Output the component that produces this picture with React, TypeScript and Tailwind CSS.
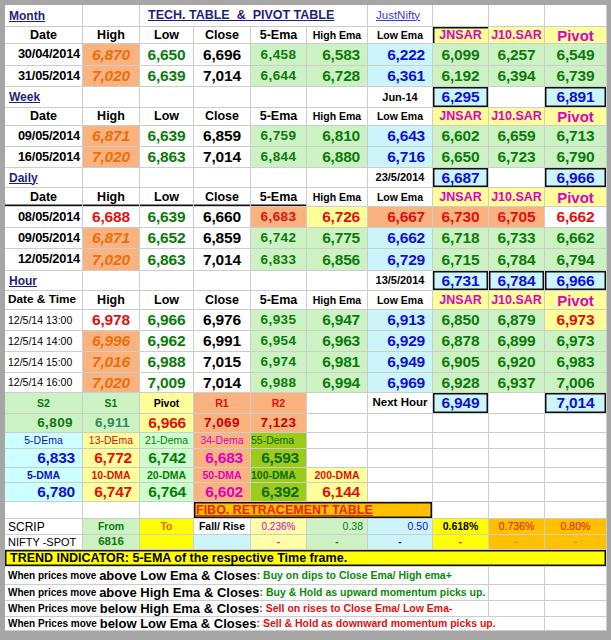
import clsx from 'clsx';
import type { ReactNode } from 'react';

const GRID = 'grid grid-cols-[78px_57px_54px_57px_56px_61px_65px_56px_56px_62px]';

const SPAN: Record<number, string> = {
  1: '',
  2: 'col-span-2',
  3: 'col-span-3',
  4: 'col-span-4',
  8: 'col-span-8',
  9: 'col-span-9',
  10: 'col-span-10',
};

const NUM = 'text-[15.5px] font-bold tracking-[-0.2px]';
const EMA = 'text-[13.5px] font-bold tracking-[0.4px]';
const HEAD = 'text-[12.5px] font-bold';
const SMALLHEAD = 'text-[10.5px] font-bold';
const SAR = 'bg-[#ffff99] text-[12.5px] font-bold text-[#e000c0]';
const TITLE = 'justify-start pl-[4px] text-[12px] font-bold text-[#1f1f80] underline';
const RIGHT = 'justify-end pr-[7px]';
const BOXNUM = 'bg-[#ccf4fb] text-[15.5px] font-bold tracking-[-0.2px] text-[#1010d8]';

const TONE = {
  hi: 'bg-[#fab27f] text-[#e8700e] italic',
  red: 'text-[#e01010]',
  low: 'text-[#0b7a0b]',
  close: 'text-black',
  green: 'bg-[#ccf2c4] text-[#0b7a0b]',
  blue: 'bg-[#ccf4fb] text-[#1010d8]',
  redOr: 'bg-[#fab27f] text-[#e01010]',
  redYl: 'bg-[#ffff99] text-[#e01010]',
};

type Tone = keyof typeof TONE;
type Val = [string, Tone];

interface CellProps {
  children?: ReactNode;
  className?: string;
  span?: number;
  box?: boolean;
}

function Cell({ children, className, span = 1, box }: CellProps) {
  return (
    <div
      className={clsx(
        'flex min-w-0 items-center justify-center whitespace-nowrap border-r border-b border-[#cdcdcd] leading-none',
        SPAN[span],
        box && 'shadow-[inset_0_0_0_1.5px_#111]',
        className,
      )}
    >
      {children}
    </div>
  );
}

function Row({ h, children }: { h: string; children: ReactNode }) {
  return <div className={clsx(GRID, h)}>{children}</div>;
}

// per column look for the nine value columns
const COL_STYLE = [NUM, NUM, NUM, EMA, clsx(NUM, RIGHT), clsx(NUM, RIGHT), NUM, NUM, NUM];

function DataRow({ h, date, hour, cells }: { h: string; date: string; hour?: boolean; cells: Val[] }) {
  return (
    <Row h={h}>
      <Cell
        className={
          hour
            ? 'justify-start pl-[3px] text-[10.5px]'
            : 'justify-end pr-[2px] text-[12.8px] font-bold tracking-[-0.2px]'
        }
      >
        {date}
      </Cell>
      {cells.map(([v, tone], i) => (
        <Cell key={i} className={clsx(COL_STYLE[i], TONE[tone])}>
          {v}
        </Cell>
      ))}
    </Row>
  );
}

function HeadRow({ h, first, line, sarEdge }: { h: string; first?: string; line?: boolean; sarEdge?: boolean }) {
  const under = line && 'shadow-[inset_0_-1.5px_0_#111]';
  return (
    <Row h={h}>
      <Cell className={clsx(first ? 'justify-start pl-[3px] text-[11.8px] font-bold' : HEAD, under)}>
        {first ?? 'Date'}
      </Cell>
      <Cell className={clsx(HEAD, under)}>High</Cell>
      <Cell className={clsx(HEAD, under)}>Low</Cell>
      <Cell className={clsx(HEAD, under)}>Close</Cell>
      <Cell className={clsx(HEAD, under)}>5-Ema</Cell>
      <Cell className={SMALLHEAD}>High Ema</Cell>
      <Cell className={SMALLHEAD}>Low Ema</Cell>
      <Cell className={clsx(SAR, sarEdge && 'shadow-[inset_1.5px_1.5px_0_#111]')}>JNSAR</Cell>
      <Cell className={SAR}>J10.SAR</Cell>
      <Cell className="bg-[#ffff99] text-[15px] font-bold text-[#e000c0]">Pivot</Cell>
    </Row>
  );
}

function SectionRow({
  h,
  title,
  label,
  sar,
  j10,
  pivot,
}: {
  h: string;
  title: string;
  label: string;
  sar: string;
  j10?: string;
  pivot: string;
}) {
  return (
    <Row h={h}>
      <Cell className={TITLE}>{title}</Cell>
      <Cell />
      <Cell />
      <Cell />
      <Cell />
      <Cell />
      <Cell className="text-[11px] font-bold">{label}</Cell>
      <Cell box className={BOXNUM}>
        {sar}
      </Cell>
      {j10 ? (
        <Cell box className={BOXNUM}>
          {j10}
        </Cell>
      ) : (
        <Cell />
      )}
      <Cell box className={BOXNUM}>
        {pivot}
      </Cell>
    </Row>
  );
}

function Blank({ n }: { n: number }) {
  return (
    <>
      {Array.from({ length: n }, (_, i) => (
        <Cell key={i} />
      ))}
    </>
  );
}

function RuleRow({ h, lead, cond, action, tone, span = 8 }: { h: string; lead: string; cond: string; action: string; tone: string; span?: number }) {
  return (
    <Row h={h}>
      <Cell span={span} className="justify-start pl-[3px] font-bold">
        <span className="text-[10px]">{lead}&nbsp;</span>
        <span className="text-[13px]">{cond}</span>
        <span className={clsx('text-[10.5px]', tone)}>:&nbsp;{action}</span>
      </Cell>
      <Blank n={10 - span} />
    </Row>
  );
}

export default function App() {
  return (
    <div className="h-[640px] w-[611px] bg-[#a6a6a6] pt-[5px] pl-[5px] font-['Liberation_Sans',Arial,sans-serif] text-black">
      <div className="w-[602px] bg-white">
        {/* Month */}
        <Row h="h-[22px]">
          <Cell className={TITLE}>Month</Cell>
          <Cell />
          <Cell span={4} className="justify-start pl-[8px] text-[12.5px] font-bold text-[#1f1f80] underline whitespace-pre">
            {'TECH. TABLE  &  PIVOT TABLE'}
          </Cell>
          <Cell className="justify-start pl-[8px] text-[11.5px] text-[#3a3acc] underline">JustNifty</Cell>
          <Blank n={3} />
        </Row>
        <HeadRow h="h-[17px]" sarEdge />
        <DataRow
          h="h-[22px]"
          date="30/04/2014"
          cells={[['6,870', 'hi'], ['6,650', 'low'], ['6,696', 'close'], ['6,458', 'green'], ['6,583', 'green'], ['6,222', 'blue'], ['6,099', 'green'], ['6,257', 'green'], ['6,549', 'green']]}
        />
        <DataRow
          h="h-[21px]"
          date="31/05/2014"
          cells={[['7,020', 'hi'], ['6,639', 'low'], ['7,014', 'close'], ['6,644', 'green'], ['6,728', 'green'], ['6,361', 'blue'], ['6,192', 'green'], ['6,394', 'green'], ['6,739', 'green']]}
        />

        {/* Week */}
        <SectionRow h="h-[21px]" title="Week" label="Jun-14" sar="6,295" pivot="6,891" />
        <HeadRow h="h-[18px]" />
        <DataRow
          h="h-[21px]"
          date="09/05/2014"
          cells={[['6,871', 'hi'], ['6,639', 'low'], ['6,859', 'close'], ['6,759', 'green'], ['6,810', 'green'], ['6,643', 'blue'], ['6,602', 'green'], ['6,659', 'green'], ['6,713', 'green']]}
        />
        <DataRow
          h="h-[21px]"
          date="16/05/2014"
          cells={[['7,020', 'hi'], ['6,863', 'low'], ['7,014', 'close'], ['6,844', 'green'], ['6,880', 'green'], ['6,716', 'blue'], ['6,650', 'green'], ['6,723', 'green'], ['6,790', 'green']]}
        />

        {/* Daily */}
        <SectionRow h="h-[20px]" title="Daily" label="23/5/2014" sar="6,687" pivot="6,966" />
        <HeadRow h="h-[19px]" line />
        <DataRow
          h="h-[21px]"
          date="08/05/2014"
          cells={[['6,688', 'red'], ['6,639', 'low'], ['6,660', 'close'], ['6,683', 'redOr'], ['6,726', 'redYl'], ['6,667', 'redOr'], ['6,730', 'redOr'], ['6,705', 'redOr'], ['6,662', 'red']]}
        />
        <DataRow
          h="h-[21px]"
          date="09/05/2014"
          cells={[['6,871', 'hi'], ['6,652', 'low'], ['6,859', 'close'], ['6,742', 'green'], ['6,775', 'green'], ['6,662', 'blue'], ['6,718', 'green'], ['6,733', 'green'], ['6,662', 'green']]}
        />
        <DataRow
          h="h-[22px]"
          date="12/05/2014"
          cells={[['7,020', 'hi'], ['6,863', 'low'], ['7,014', 'close'], ['6,833', 'green'], ['6,856', 'green'], ['6,729', 'blue'], ['6,715', 'green'], ['6,784', 'green'], ['6,794', 'green']]}
        />

        {/* Hour */}
        <SectionRow h="h-[20px]" title="Hour" label="13/5/2014" sar="6,731" j10="6,784" pivot="6,966" />
        <HeadRow h="h-[19px]" first="Date & Time" />
        <DataRow
          h="h-[21px]"
          hour
          date="12/5/14 13:00"
          cells={[['6,978', 'red'], ['6,966', 'low'], ['6,976', 'close'], ['6,935', 'green'], ['6,947', 'green'], ['6,913', 'blue'], ['6,850', 'green'], ['6,879', 'green'], ['6,973', 'redYl']]}
        />
        <DataRow
          h="h-[21px]"
          hour
          date="12/5/14 14:00"
          cells={[['6,996', 'hi'], ['6,962', 'low'], ['6,991', 'close'], ['6,954', 'green'], ['6,963', 'green'], ['6,929', 'blue'], ['6,878', 'green'], ['6,899', 'green'], ['6,973', 'green']]}
        />
        <DataRow
          h="h-[21px]"
          hour
          date="12/5/14 15:00"
          cells={[['7,016', 'hi'], ['6,988', 'low'], ['7,015', 'close'], ['6,974', 'green'], ['6,981', 'green'], ['6,949', 'blue'], ['6,905', 'green'], ['6,920', 'green'], ['6,983', 'green']]}
        />
        <DataRow
          h="h-[20px]"
          hour
          date="12/5/14 16:00"
          cells={[['7,020', 'hi'], ['7,009', 'low'], ['7,014', 'close'], ['6,988', 'green'], ['6,994', 'green'], ['6,969', 'blue'], ['6,928', 'green'], ['6,937', 'green'], ['7,006', 'green']]}
        />

        {/* pivot levels */}
        <Row h="h-[21px]">
          <Cell className="bg-[#ccf2c4] text-[10.5px] font-bold text-[#0b7a0b]">S2</Cell>
          <Cell className="bg-[#ccf2c4] text-[10.5px] font-bold text-[#0b7a0b]">S1</Cell>
          <Cell className="bg-[#ffff99] text-[10.5px] font-bold">Pivot</Cell>
          <Cell className="bg-[#fab27f] text-[10.5px] font-bold text-[#e01010]">R1</Cell>
          <Cell className="bg-[#fab27f] text-[10.5px] font-bold text-[#e01010]">R2</Cell>
          <Cell />
          <Cell className="text-[11.5px] font-bold">Next Hour</Cell>
          <Cell box className={BOXNUM}>
            6,949
          </Cell>
          <Cell />
          <Cell box className={BOXNUM}>
            7,014
          </Cell>
        </Row>
        <Row h="h-[19px]">
          <Cell className={clsx(EMA, 'justify-end pr-[9px] bg-[#ccf2c4] text-[#0b7a0b]')}>6,809</Cell>
          <Cell className={clsx(EMA, 'justify-end pr-[9px] bg-[#ccf2c4] text-[#2e8b57]')}>6,911</Cell>
          <Cell className={clsx(NUM, RIGHT, 'bg-[#ffff99] text-[#e01010]')}>6,966</Cell>
          <Cell className={clsx(EMA, 'bg-[#fab27f] text-[#c80000]')}>7,069</Cell>
          <Cell className={clsx(EMA, 'bg-[#fab27f] text-[#c80000]')}>7,123</Cell>
          <Blank n={5} />
        </Row>

        {/* moving averages */}
        <Row h="h-[16px]">
          <Cell className="bg-[#ccffff] text-[10.5px] text-[#1010c8]">5-DEma</Cell>
          <Cell className="bg-[#ffff99] text-[10.5px] text-[#e01010]">13-DEma</Cell>
          <Cell className="bg-[#ccffcc] text-[10.5px] text-[#0b7a0b]">21-Dema</Cell>
          <Cell className="bg-[#fab27f] text-[10.5px] text-[#e000c0]">34-Dema</Cell>
          <Cell className="justify-start bg-[#9ccb1a] text-[10.5px] text-[#0b6a0b]">55-Dema</Cell>
          <Blank n={5} />
        </Row>
        <Row h="h-[19px]">
          <Cell className={clsx(NUM, RIGHT, 'bg-[#ccffff] text-[#1010d8]')}>6,833</Cell>
          <Cell className={clsx(NUM, RIGHT, 'bg-[#ffff99] text-[#e01010]')}>6,772</Cell>
          <Cell className={clsx(NUM, RIGHT, 'bg-[#ccffcc] text-[#0b7a0b]')}>6,742</Cell>
          <Cell className={clsx(NUM, RIGHT, 'bg-[#fab27f] text-[#e000c0]')}>6,683</Cell>
          <Cell className={clsx(NUM, RIGHT, 'bg-[#9ccb1a] text-[#0b6a0b]')}>6,593</Cell>
          <Blank n={5} />
        </Row>
        <Row h="h-[15px]">
          <Cell className="bg-[#ccffff] text-[10.5px] font-bold text-[#1010c8]">5-DMA</Cell>
          <Cell className="bg-[#ffff99] text-[10.5px] font-bold text-[#e01010]">10-DMA</Cell>
          <Cell className="bg-[#ccffcc] text-[10.5px] font-bold text-[#0b7a0b]">20-DMA</Cell>
          <Cell className="bg-[#fab27f] text-[10.5px] font-bold text-[#e000c0]">50-DMA</Cell>
          <Cell className="justify-start bg-[#9ccb1a] text-[10.5px] font-bold text-[#0b6a0b]">100-DMA</Cell>
          <Cell className="bg-[#ffff99] text-[10.5px] font-bold text-[#e01010]">200-DMA</Cell>
          <Blank n={4} />
        </Row>
        <Row h="h-[19px]">
          <Cell className={clsx(NUM, RIGHT, 'bg-[#ccffff] text-[#1010d8]')}>6,780</Cell>
          <Cell className={clsx(NUM, RIGHT, 'bg-[#ffff99] text-[#e01010]')}>6,747</Cell>
          <Cell className={clsx(NUM, RIGHT, 'bg-[#ccffcc] text-[#0b7a0b]')}>6,764</Cell>
          <Cell className={clsx(NUM, RIGHT, 'bg-[#fab27f] text-[#e000c0]')}>6,602</Cell>
          <Cell className={clsx(NUM, RIGHT, 'bg-[#9ccb1a] text-[#0b6a0b]')}>6,392</Cell>
          <Cell className={clsx(NUM, RIGHT, 'bg-[#ffff99] text-[#e01010]')}>6,144</Cell>
          <Blank n={4} />
        </Row>

        {/* fibonacci */}
        <Row h="h-[17px]">
          <Blank n={3} />
          <Cell span={4} box className="justify-start bg-[#ffc000] pl-[2px] text-[12.5px] font-bold text-[#e8200c] underline">
            FIBO. RETRACEMENT TABLE
          </Cell>
          <Blank n={3} />
        </Row>
        <Row h="h-[16px]">
          <Cell className="justify-start pl-[3px] text-[12px]">SCRIP</Cell>
          <Cell className="bg-[#ccf2c4] text-[10.5px] font-bold text-[#0b7a0b]">From</Cell>
          <Cell className="bg-[#ffff00] text-[10.5px] font-bold text-[#e8600a]">To</Cell>
          <Cell className="text-[10.5px] font-bold">Fall/ Rise</Cell>
          <Cell className="bg-[#ffffa8] text-[10px] text-[#e000c0]">0.236%</Cell>
          <Cell className="justify-end bg-[#ccf2c4] pr-[4px] text-[10.5px] text-[#0b7a0b]">0.38</Cell>
          <Cell className="justify-end bg-[#ccf4fb] pr-[4px] text-[10.5px] text-[#1010d8]">0.50</Cell>
          <Cell className="bg-[#ffff00] text-[10.5px] font-bold">0.618%</Cell>
          <Cell className="bg-[#ffc000] text-[10.5px] text-[#e01010]">0.736%</Cell>
          <Cell className="bg-[#ffc000] text-[10.5px] text-[#e01010]">0.80%</Cell>
        </Row>
        <Row h="h-[15px]">
          <Cell className="justify-start pl-[3px] text-[11px]">NIFTY -SPOT</Cell>
          <Cell className="bg-[#ccf2c4] text-[11.5px] font-bold text-[#0b7a0b]">6816</Cell>
          <Cell className="bg-[#ffff00]" />
          <Cell className="bg-[#ccf4fb]" />
          <Cell className="bg-[#ffffa8] text-[10px] font-bold text-[#e000c0]">-</Cell>
          <Cell className="bg-[#ccf2c4] text-[10px] font-bold text-[#0b7a0b]">-</Cell>
          <Cell className="bg-[#ccf4fb] text-[10px] font-bold text-[#1010d8]">-</Cell>
          <Cell className="bg-[#ffff00] text-[10px] font-bold text-[#e01010]">-</Cell>
          <Cell className="bg-[#ffc000] text-[10px] text-[#e07000]">-</Cell>
          <Cell className="bg-[#ffc000] text-[10px] text-[#e07000]">-</Cell>
        </Row>
        <Row h="h-[17px]">
          <Cell span={10} box className="justify-start bg-[#ffff00] pl-[5px] text-[12.5px] font-bold">
            TREND INDICATOR: 5-EMA of the respective Time frame.
          </Cell>
        </Row>

        {/* rules */}
        <RuleRow
          h="h-[18px]"
          lead="When prices move"
          cond="above Low Ema & Closes"
          action="Buy on dips to Close Ema/ High ema+"
          tone="text-[#0b8a0b]"
        />
        <RuleRow
          h="h-[16px]"
          lead="When prices move"
          cond="above High Ema & Closes"
          action="Buy & Hold as upward momentum picks up."
          tone="text-[#0b8a0b]"
        />
        <RuleRow
          h="h-[16px]"
          lead="When Prices move"
          cond="below High Ema & Closes"
          action="Sell on rises to Close Ema/ Low Ema-"
          tone="text-[#e01010]"
        />
        <RuleRow
          h="h-[14px]"
          lead="When Prices move"
          cond="below Low Ema & Closes"
          action="Sell & Hold as downward momentum picks up."
          tone="text-[#e01010]"
          span={9}
        />
      </div>
    </div>
  );
}
